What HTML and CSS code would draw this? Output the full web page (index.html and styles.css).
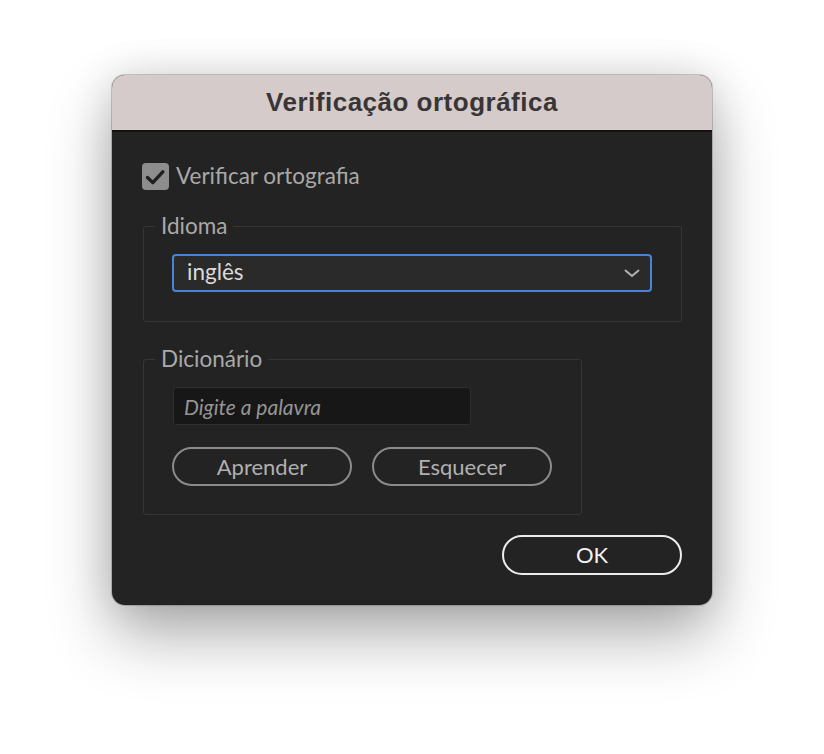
FILE: index.html
```html
<!DOCTYPE html>
<html lang="pt">
<head>
<meta charset="utf-8">
<title>Verificação ortográfica</title>
<link rel="stylesheet" href="styles.css">
</head>
<body>
<div class="dialog">
  <div class="titlebar">Verificação ortográfica</div>
  <div class="content">
    <label class="check-row">
      <span class="checkbox">
        <svg width="27" height="27" viewBox="0 0 27 27"><path d="M5.5 14.5 L10.8 19.6 L20.8 8.8" fill="none" stroke="#1f1f1f" stroke-width="3.4" stroke-linecap="round" stroke-linejoin="round"/></svg>
      </span>
      <span class="check-label">Verificar ortografia</span>
    </label>

    <fieldset class="group group-lang">
      <legend>Idioma</legend>
      <div class="group-body">
        <div class="select">
          <span class="select-value">inglês</span>
          <svg class="chevron" width="16" height="9" viewBox="0 0 16 9"><path d="M1.5 1.5 L8 7 L14.5 1.5" fill="none" stroke="#b4b4b4" stroke-width="1.9" stroke-linecap="round" stroke-linejoin="round"/></svg>
        </div>
      </div>
    </fieldset>

    <fieldset class="group group-dict">
      <legend>Dicionário</legend>
      <div class="group-body dict-body">
        <div class="word-input">Digite a palavra</div>
        <div class="btn-row">
          <button class="btn">Aprender</button>
          <button class="btn">Esquecer</button>
        </div>
      </div>
    </fieldset>

    <div class="footer">
      <button class="btn btn-ok">OK</button>
    </div>
  </div>
</div>
</body>
</html>
```

FILE: styles.css
```css
html, body {
  margin: 0;
  padding: 0;
  background: #ffffff;
}

body {
  width: 824px;
  height: 754px;
  overflow: hidden;
}

.dialog {
  margin: 75px 0 0 112px;
  width: 600px;
  border-radius: 13px;
  overflow: hidden;
  background: #232323;
  box-shadow: 0 0 0 1px rgba(0, 0, 0, 0.18), 0 30px 64px rgba(0, 0, 0, 0.32), 0 0 40px rgba(0, 0, 0, 0.12);
}

.titlebar {
  height: 57px;
  box-sizing: border-box;
  background: #d4cbca;
  border-bottom: 2px solid #121212;
  display: flex;
  align-items: center;
  justify-content: center;
  font-family: "Liberation Sans", Arial, sans-serif;
  font-weight: bold;
  font-size: 26px;
  letter-spacing: 0.5px;
  color: #3a3535;
  padding-bottom: 1px;
}

.content {
  padding: 30px 30px 30px 31px;
  font-family: Lato, "Open Sans", sans-serif;
  font-size: 22.5px;
  color: #ababab;
}

.check-row {
  display: flex;
  align-items: center;
  height: 28px;
  margin-left: -1px;
}

.checkbox {
  width: 27px;
  height: 27px;
  border-radius: 4px;
  background: #8d8d8d;
  display: flex;
  flex: none;
}

.check-label {
  margin-left: 7px;
  color: #a9a9a9;
  margin-top: -1px;
}

.group {
  margin: 0;
  border: 1px solid #363636;
  border-radius: 3px;
  padding: 0;
  min-width: 0;
}

.group legend {
  margin-left: 11px;
  padding: 0 6px;
  line-height: 24px;
  height: 24px;
  color: #a9a9a9;
}

.group-lang {
  margin-top: 24px;
}

.group-body {
  padding: 16px 29px 29px 28px;
}

.select {
  height: 38px;
  box-sizing: border-box;
  border: 2px solid #4a84d6;
  border-radius: 4px;
  background: #2a2a2a;
  display: flex;
  align-items: center;
  justify-content: space-between;
  padding: 0 10px 0 13px;
}

.select-value {
  color: #dadada;
  line-height: 1;
  margin-top: -1px;
}

.chevron {
  flex: none;
}

.group-dict {
  margin-top: 25px;
  width: 439px;
  box-sizing: border-box;
}

.dict-body {
  padding: 16px 28px 28px 29px;
}

.word-input {
  width: 298px;
  height: 38px;
  box-sizing: border-box;
  background: #171717;
  border: 1px solid #2f2f2f;
  border-radius: 3px;
  display: flex;
  align-items: center;
  padding-left: 10px;
  font-style: italic;
  color: #959595;
  font-size: 21px;
}

.btn-row {
  display: flex;
  gap: 20px;
  margin-top: 22px;
  margin-left: -1px;
}

.btn {
  width: 180px;
  height: 39px;
  box-sizing: border-box;
  border: 2px solid #8b8b8b;
  border-radius: 20px;
  background: transparent;
  color: #b0b0b0;
  font-family: Lato, "Open Sans", sans-serif;
  font-size: 22px;
  padding: 0 0 1px 0;
  margin: 0;
}

.footer {
  display: flex;
  justify-content: flex-end;
  margin-top: 20px;
}

.btn-ok {
  height: 40px;
  border: 2.5px solid #ececec;
  color: #f2f2f2;
}
```
